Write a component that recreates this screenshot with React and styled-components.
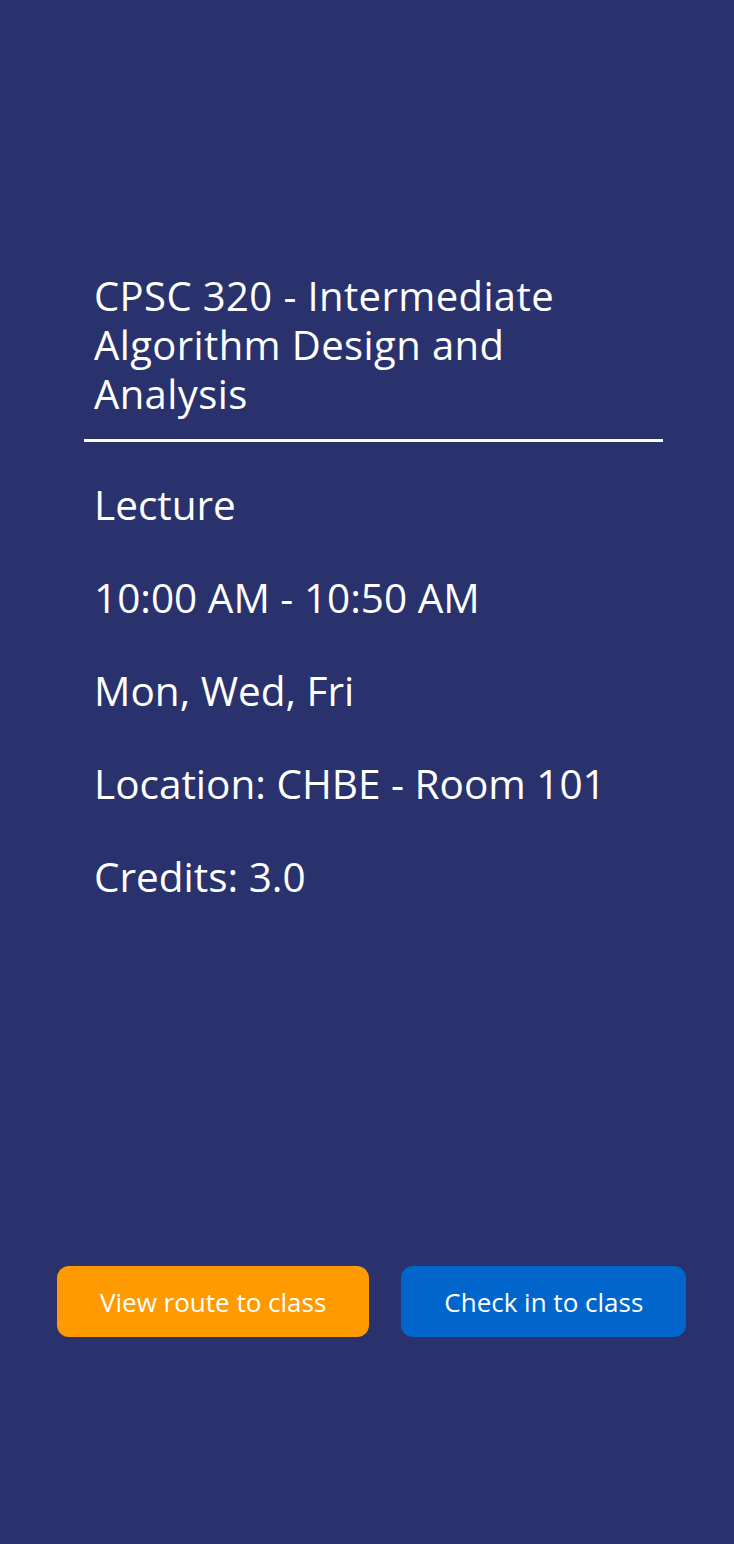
import React from 'react';
import styled, { createGlobalStyle } from 'styled-components';

const GlobalStyle = createGlobalStyle`
  html, body {
    margin: 0;
    padding: 0;
    background: #29326d;
  }
  * {
    box-sizing: border-box;
  }
`;

const Screen = styled.div`
  min-height: 1544px;
  display: flex;
  flex-direction: column;
  background: #29326d;
  color: #ffffff;
  font-family: "Open Sans", Roboto, sans-serif;
  padding-top: 271px;
`;

const Header = styled.div`
  margin: 0 71px 0 84px;
  padding: 0 10px 21px 10px;
  border-bottom: 3px solid #ffffff;
`;

const Title = styled.h1`
  margin: 0;
  font-size: 40px;
  font-weight: 400;
  line-height: 49px;
  letter-spacing: 0.4px;
`;

const Details = styled.div`
  display: flex;
  flex-direction: column;
  gap: 45px;
  padding: 39px 0 0 94px;
`;

const Detail = styled.p`
  margin: 0;
  font-size: 40.5px;
  line-height: 48px;
`;

const Actions = styled.div`
  display: flex;
  gap: 32px;
  padding-left: 57px;
  margin-top: 365px;
`;

const ActionButton = styled.button`
  height: 71px;
  padding: 0 43px;
  border: none;
  border-radius: 12px;
  background: ${props => props.color};
  color: #ffffff;
  font-family: "Open Sans", Roboto, sans-serif;
  font-size: 26px;
  cursor: pointer;
`;

const details = [
  'Lecture',
  '10:00 AM - 10:50 AM',
  'Mon, Wed, Fri',
  'Location: CHBE - Room 101',
  'Credits: 3.0',
];

const App = () => (
  <>
    <GlobalStyle />
    <Screen>
      <Header>
        <Title>CPSC 320 - Intermediate Algorithm Design and Analysis</Title>
      </Header>
      <Details>
        {details.map(text => (
          <Detail key={text}>{text}</Detail>
        ))}
      </Details>
      <Actions>
        <ActionButton color="#ff9a00">View route to class</ActionButton>
        <ActionButton color="#0066cc">Check in to class</ActionButton>
      </Actions>
    </Screen>
  </>
);

export default App;
